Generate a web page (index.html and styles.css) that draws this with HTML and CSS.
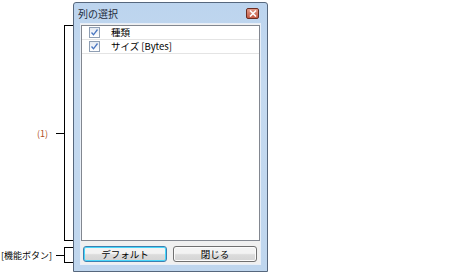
FILE: index.html
```html
<!DOCTYPE html>
<html lang="ja">
<head>
  <meta charset="UTF-8">
  <title>列の選択</title>
  <link rel="stylesheet" href="styles.css">
</head>
<body>
  <div class="page">
    <!-- Callouts on the left -->
    <div class="notes">
      <div class="note note-list">
        <span class="label num">(1)</span>
        <span class="tick"></span>
        <span class="bracket"></span>
      </div>
      <div class="note note-btn">
        <span class="label">[機能ボタン]</span>
        <span class="tick"></span>
        <span class="bracket"></span>
      </div>
    </div>

    <!-- Dialog -->
    <div class="window">
      <div class="titlebar">
        <span class="title">列の選択</span>
        <span class="close">
          <svg width="8" height="7" viewBox="0 0 8 7"><path d="M1 0.5 L7 6.5 M7 0.5 L1 6.5" stroke="#fff" stroke-width="1.6"/></svg>
        </span>
      </div>
      <div class="client">
        <div class="list">
          <div class="row">
            <span class="check"><svg width="9" height="9" viewBox="0 0 9 9"><path d="M1.5 4.5 L3.5 6.8 L7.5 1.5" fill="none" stroke="#4a76c0" stroke-width="1.3"/></svg></span>
            <span class="name">種類</span>
          </div>
          <div class="row">
            <span class="check"><svg width="9" height="9" viewBox="0 0 9 9"><path d="M1.5 4.5 L3.5 6.8 L7.5 1.5" fill="none" stroke="#4a76c0" stroke-width="1.3"/></svg></span>
            <span class="name">サイズ [Bytes]</span>
          </div>
        </div>
        <div class="buttons">
          <button class="btn default">デフォルト</button>
          <button class="btn">閉じる</button>
        </div>
      </div>
    </div>
  </div>
</body>
</html>
```

FILE: styles.css
```css
body {
  margin: 0;
  background: #fff;
  font-family: "Noto Sans CJK JP", "Liberation Sans", sans-serif;
  font-size: 9.5px;
  color: #000;
}
.page {
  display: flex;
  padding-top: 2px;
}
.notes {
  width: 73px;
  flex-shrink: 0;
  display: flex;
  flex-direction: column;
  padding-top: 23px;
}
.note {
  display: flex;
  align-items: center;
  justify-content: flex-end;
}
.note-list {
  height: 216px;
}
.note-btn {
  height: 16px;
  margin-top: 6px;
}
.label {
  margin-right: 4px;
  font-size: 9px;
  line-height: 1;
  white-space: nowrap;
  flex-shrink: 0;
}
.label.num {
  margin-right: 8px;
  color: #b04e1a;
}
.tick {
  width: 8px;
  height: 1px;
  flex-shrink: 0;
  background: #000;
}
.bracket {
  width: 8px;
  flex-shrink: 0;
  align-self: stretch;
  border: 1px solid #000;
  border-right: none;
}
.window {
  border: 1px solid #56677d;
  border-radius: 3px 3px 0 0;
  background: linear-gradient(#bcd4ee, #c5daf0 30%, #bfd6ee);
  display: flex;
  flex-direction: column;
  padding: 0 6px 6px;
  width: 181px;
  height: 262px;
}
.titlebar {
  height: 20px;
  display: flex;
  align-items: center;
  justify-content: space-between;
}
.title {
  font-size: 10px;
  color: #1e2b3c;
  margin-left: -2px;
}
.close {
  width: 11px;
  height: 9px;
  border: 1px solid #6b2d22;
  border-radius: 2px;
  background: linear-gradient(#e29a88, #c45a44);
  display: flex;
  align-items: center;
  justify-content: center;
  margin-right: 2px;
}
.client {
  flex: 1;
  background: #f0f0f0;
  border: 1px solid #e8eff8;
  padding: 1px 0;
  display: flex;
  flex-direction: column;
}
.list {
  height: 214px;
  border: 1px solid #828790;
  background: #fff;
}
.row {
  display: flex;
  align-items: center;
  height: 13px;
  border-bottom: 1px solid #e4e4e4;
}
.check {
  width: 9px;
  height: 9px;
  border: 1px solid #8f9fb4;
  background: linear-gradient(#e4eaf3, #fff);
  margin-left: 7px;
  display: flex;
}
.name {
  margin-left: 11px;
  line-height: 1;
}
.buttons {
  display: flex;
  justify-content: space-between;
  padding: 5px 3px 0 2px;
}
.btn {
  width: 84px;
  height: 16px;
  padding: 0;
  font-family: inherit;
  font-size: 9.5px;
  border: 1px solid #707070;
  border-radius: 3px;
  background: linear-gradient(#f3f3f3 45%, #dcdcdc 55%, #d4d4d4);
  box-shadow: inset 0 0 0 1px #fbfbfb;
}
.btn.default {
  border-color: #3c7fb1;
  box-shadow: inset 0 0 0 1px #48d7fa;
}
```
